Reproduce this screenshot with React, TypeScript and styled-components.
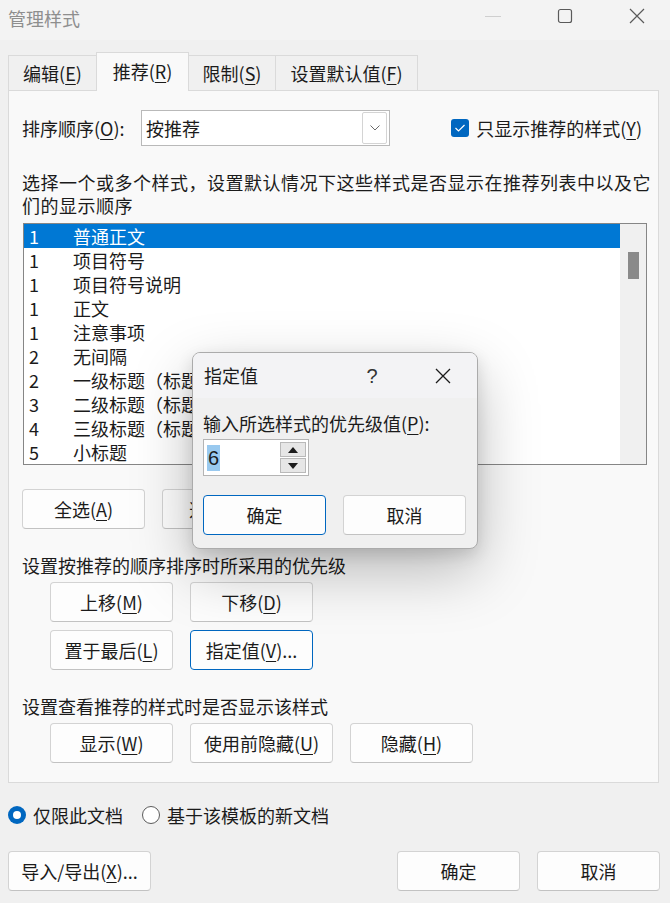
import React from "react";
import styled, { createGlobalStyle } from "styled-components";

const GlobalStyle = createGlobalStyle`
  html, body {
    margin: 0;
    padding: 0;
  }
  body {
    background: #f0f0f0;
    font-family: "Noto Sans CJK SC", "Microsoft YaHei", sans-serif;
    color: #1b1b1b;
  }
  u {
    text-underline-offset: 3px;
    text-decoration-thickness: 1px;
  }
`;

const Window = styled.div`
  position: relative;
  width: 670px;
  height: 903px;
  background: #f0f0f0;
  overflow: hidden;
`;

const TitleBar = styled.div`
  height: 40px;
  display: flex;
  align-items: center;
  padding-left: 8px;
  background: #f3f3f3;
`;

const Title = styled.div`
  flex: 1;
  font-size: 18px;
  color: #8e8e8e;
  line-height: 24px;
  margin-top: -4px;
`;

const Controls = styled.div`
  display: flex;
  height: 40px;
  margin-right: -3px;
`;

const ControlBtn = styled.div`
  width: 72px;
  height: 40px;
  display: flex;
  align-items: center;
  justify-content: center;
  margin-top: -4px;
`;

const TabBar = styled.div`
  display: flex;
  align-items: flex-end;
  margin-top: 13px;
  padding-left: 8px;
  height: 38px;
  position: relative;
  z-index: 1;
  margin-bottom: -1px;
`;

const Tab = styled.div<{ $active?: boolean; $w: number }>`
  box-sizing: border-box;
  width: ${(p) => p.$w}px;
  height: ${(p) => (p.$active ? 39 : 36)}px;
  border: 1px solid #dadada;
  border-bottom: ${(p) => (p.$active ? "none" : "1px solid #dadada")};
  margin-left: -1px;
  background: ${(p) => (p.$active ? "#f9f9f9" : "#f0f0f0")};
  font-size: 18px;
  line-height: 24px;
  display: flex;
  align-items: center;
  justify-content: center;
  padding-bottom: ${(p) => (p.$active ? 2 : 0)}px;
  &:first-child {
    margin-left: 0;
  }
`;

const Panel = styled.div`
  box-sizing: border-box;
  margin-left: 8px;
  width: 651px;
  height: 693px;
  background: #f9f9f9;
  border: 1px solid #dadada;
  padding: 19px 13px 0 13px;
`;

const SortRow = styled.div`
  display: flex;
  align-items: center;
  height: 36px;
`;

const Label = styled.div`
  font-size: 18px;
  line-height: 24px;
  white-space: nowrap;
`;

const SortLabel = styled(Label)`
  width: 119px;
`;

const Select = styled.div`
  box-sizing: border-box;
  width: 249px;
  height: 36px;
  border: 1px solid #b9b9b9;
  background: #fff;
  display: flex;
  align-items: center;
  padding: 1px 2px 1px 4px;
`;

const SelectText = styled.div`
  flex: 1;
  font-size: 18px;
  line-height: 24px;
`;

const SelectArrow = styled.div`
  box-sizing: border-box;
  width: 25px;
  height: 32px;
  border: 1px solid #d4d4d4;
  border-radius: 2px;
  display: flex;
  align-items: center;
  justify-content: center;
`;

const CheckRow = styled.div`
  margin-left: auto;
  margin-right: 3px;
  display: flex;
  align-items: center;
  gap: 7px;
`;

const CheckBox = styled.div`
  width: 18px;
  height: 18px;
  border-radius: 3px;
  background: #0067c0;
  display: flex;
  align-items: center;
  justify-content: center;
`;

const Description = styled.div`
  margin-top: 25px;
  font-size: 18px;
  line-height: 23px;
  white-space: nowrap;
  letter-spacing: 0.5px;
`;

const List = styled.div`
  box-sizing: border-box;
  margin-top: 6px;
  margin-left: 1px;
  width: 624px;
  height: 242px;
  border: 1px solid #868686;
  background: #fff;
  display: flex;
`;

const Rows = styled.div`
  flex: 1;
  overflow: hidden;
`;

const Row = styled.div<{ $selected?: boolean }>`
  display: flex;
  height: 24px;
  align-items: center;
  font-size: 18px;
  line-height: 24px;
  background: ${(p) => (p.$selected ? "#0078d4" : "transparent")};
  color: ${(p) => (p.$selected ? "#fff" : "#1b1b1b")};
  white-space: nowrap;
`;

const Num = styled.div`
  width: 44px;
  padding-left: 5px;
`;

const ScrollTrack = styled.div`
  width: 26px;
  background: #f0f0f0;
  display: flex;
  justify-content: center;
  padding-top: 28px;
`;

const ScrollThumb = styled.div`
  width: 11px;
  height: 27px;
  background: #8a8a8a;
`;

const ButtonRow = styled.div<{ $indent?: number; $top: number }>`
  display: flex;
  gap: 17px;
  margin-top: ${(p) => p.$top}px;
  padding-left: ${(p) => p.$indent ?? 0}px;
`;

const Button = styled.div<{ $w?: number; $focus?: boolean }>`
  box-sizing: border-box;
  width: ${(p) => p.$w ?? 123}px;
  height: 40px;
  border-radius: 4px;
  border: 1px solid ${(p) => (p.$focus ? "#0067c0" : "#d3d3d3")};
  border-bottom-color: ${(p) => (p.$focus ? "#0067c0" : "#c2c2c2")};
  background: #fdfdfd;
  display: flex;
  align-items: center;
  justify-content: center;
  font-size: 18px;
  line-height: 24px;
  white-space: nowrap;
`;

const SectionLabel = styled(Label)`
  margin-top: 24px;
`;

const RadioRow = styled.div`
  display: flex;
  align-items: center;
  margin-top: 20px;
  padding-left: 8px;
  height: 24px;
`;

const RadioItem = styled.div`
  display: flex;
  align-items: center;
  gap: 7px;
  margin-right: 19px;
  font-size: 18px;
  line-height: 24px;
`;

const Radio = styled.div<{ $on?: boolean }>`
  box-sizing: border-box;
  width: 18px;
  height: 18px;
  border-radius: 50%;
  background: ${(p) => (p.$on ? "#0067c0" : "#fff")};
  border: ${(p) => (p.$on ? "none" : "1px solid #5c5c5c")};
  display: flex;
  align-items: center;
  justify-content: center;
  &::after {
    content: "";
    display: ${(p) => (p.$on ? "block" : "none")};
    width: 8px;
    height: 8px;
    border-radius: 50%;
    background: #fff;
  }
`;

const Footer = styled.div`
  display: flex;
  margin-top: 24px;
  padding: 0 10px 0 8px;
  gap: 17px;
`;

const Spacer = styled.div`
  flex: 1;
`;

const Grip = styled.div`
  position: absolute;
  right: 1px;
  bottom: 1px;
  width: 10px;
  height: 10px;
`;

/* small modal */

const Dialog = styled.div`
  position: absolute;
  left: 192px;
  top: 352px;
  box-sizing: border-box;
  width: 286px;
  height: 197px;
  border: 1px solid #ababab;
  border-radius: 8px;
  background: #f0f0f0;
  overflow: hidden;
  box-shadow: 0 22px 60px rgba(0, 0, 0, 0.26), 0 6px 16px rgba(0, 0, 0, 0.12);
  z-index: 5;
`;

const DialogTitle = styled.div`
  height: 45px;
  background: #f3f3f5;
  display: flex;
  align-items: center;
  padding-left: 11px;
`;

const DialogTitleText = styled.div`
  flex: 1;
  font-size: 18px;
  line-height: 24px;
  margin-top: -1px;
`;

const Help = styled.div`
  width: 56px;
  text-align: center;
  font-size: 20px;
  line-height: 24px;
  color: #333;
  font-family: "Liberation Sans", sans-serif;
  margin-right: 15px;
`;

const DialogClose = styled.div`
  width: 56px;
  display: flex;
  justify-content: center;
  margin-right: 6px;
`;

const DialogBody = styled.div`
  padding: 13px 0 0 10px;
`;

const Spin = styled.div`
  box-sizing: border-box;
  margin-top: 4px;
  width: 106px;
  height: 37px;
  border: 1px solid #b4b4b4;
  background: #fff;
  display: flex;
  padding: 2px;
`;

const SpinValue = styled.div`
  flex: 1;
  display: flex;
  align-items: center;
  padding-left: 1px;
`;

const Selected = styled.span`
  background: #99c9ef;
  font-size: 20px;
  line-height: 26px;
  padding: 0 1px;
  font-family: "Liberation Sans", sans-serif;
`;

const SpinButtons = styled.div`
  width: 26px;
  display: flex;
  flex-direction: column;
  gap: 1px;
`;

const SpinBtn = styled.div`
  box-sizing: border-box;
  flex: 1;
  background: #e6e6e6;
  border: 1px solid #b9b9b9;
  display: flex;
  align-items: center;
  justify-content: center;
`;

const DialogButtons = styled.div`
  display: flex;
  gap: 17px;
  margin-top: 19px;
`;

const rows: [string, string][] = [
  ["1", "普通正文"],
  ["1", "项目符号"],
  ["1", "项目符号说明"],
  ["1", "正文"],
  ["1", "注意事项"],
  ["2", "无间隔"],
  ["2", "一级标题（标题 1）"],
  ["3", "二级标题（标题 2）"],
  ["4", "三级标题（标题 3）"],
  ["5", "小标题"],
];

export default function App() {
  return (
    <Window>
      <GlobalStyle />
      <TitleBar>
        <Title>管理样式</Title>
        <Controls>
          <ControlBtn>
            <svg width="16" height="16" viewBox="0 0 16 16">
              <line x1="0" y1="8.5" x2="16" y2="8.5" stroke="#cfcfcf" strokeWidth="1" />
            </svg>
          </ControlBtn>
          <ControlBtn>
            <svg width="16" height="16" viewBox="0 0 16 16">
              <rect x="1.5" y="1.5" width="13" height="13" rx="2" fill="none" stroke="#5a5a5a" strokeWidth="1.2" />
            </svg>
          </ControlBtn>
          <ControlBtn>
            <svg width="16" height="16" viewBox="0 0 16 16">
              <path d="M1 1 L15 15 M15 1 L1 15" stroke="#5a5a5a" strokeWidth="1.2" />
            </svg>
          </ControlBtn>
        </Controls>
      </TitleBar>

      <TabBar>
        <Tab $w={89}>
          编辑(<u>E</u>)
        </Tab>
        <Tab $w={93} $active>
          推荐(<u>R</u>)
        </Tab>
        <Tab $w={88}>
          限制(<u>S</u>)
        </Tab>
        <Tab $w={143}>
          设置默认值(<u>F</u>)
        </Tab>
      </TabBar>

      <Panel>
        <SortRow>
          <SortLabel>
            排序顺序(<u>O</u>):
          </SortLabel>
          <Select>
            <SelectText>按推荐</SelectText>
            <SelectArrow>
              <svg width="10" height="6" viewBox="0 0 10 6">
                <path d="M0.5 0.5 L5 5 L9.5 0.5" fill="none" stroke="#6a6a6a" strokeWidth="1" />
              </svg>
            </SelectArrow>
          </Select>
          <CheckRow>
            <CheckBox>
              <svg width="12" height="10" viewBox="0 0 12 10">
                <path d="M1.5 5 L4.5 8 L10.5 2" fill="none" stroke="#fff" strokeWidth="1.2" />
              </svg>
            </CheckBox>
            <Label>
              只显示推荐的样式(<u>Y</u>)
            </Label>
          </CheckRow>
        </SortRow>

        <Description>
          选择一个或多个样式，设置默认情况下这些样式是否显示在推荐列表中以及它
          <br />
          们的显示顺序
        </Description>

        <List>
          <Rows>
            {rows.map(([n, name], i) => (
              <Row key={i} $selected={i === 0}>
                <Num>{n}</Num>
                <div>{name}</div>
              </Row>
            ))}
          </Rows>
          <ScrollTrack>
            <ScrollThumb />
          </ScrollTrack>
        </List>

        <ButtonRow $top={24}>
          <Button>
            全选(<u>A</u>)
          </Button>
          <Button $w={150}>
            选择内置(<u>B</u>)
          </Button>
        </ButtonRow>

        <SectionLabel>设置按推荐的顺序排序时所采用的优先级</SectionLabel>
        <ButtonRow $top={5} $indent={28}>
          <Button>
            上移(<u>M</u>)
          </Button>
          <Button>
            下移(<u>D</u>)
          </Button>
        </ButtonRow>
        <ButtonRow $top={8} $indent={28}>
          <Button>
            置于最后(<u>L</u>)
          </Button>
          <Button $focus>
            指定值(<u>V</u>)...
          </Button>
        </ButtonRow>

        <SectionLabel>设置查看推荐的样式时是否显示该样式</SectionLabel>
        <ButtonRow $top={5} $indent={28}>
          <Button>
            显示(<u>W</u>)
          </Button>
          <Button $w={143}>
            使用前隐藏(<u>U</u>)
          </Button>
          <Button>
            隐藏(<u>H</u>)
          </Button>
        </ButtonRow>
      </Panel>

      <RadioRow>
        <RadioItem>
          <Radio $on />
          仅限此文档
        </RadioItem>
        <RadioItem>
          <Radio />
          基于该模板的新文档
        </RadioItem>
      </RadioRow>

      <Footer>
        <Button $w={143}>
          导入/导出(<u>X</u>)...
        </Button>
        <Spacer />
        <Button>确定</Button>
        <Button>取消</Button>
      </Footer>

      <Grip>
        <svg width="10" height="10" viewBox="0 0 10 10">
          <path d="M9 3 L3 9 M9 6 L6 9" stroke="#9a9a9a" strokeWidth="1" />
        </svg>
      </Grip>

      <Dialog>
        <DialogTitle>
          <DialogTitleText>指定值</DialogTitleText>
          <Help>?</Help>
          <DialogClose>
            <svg width="16" height="16" viewBox="0 0 16 16">
              <path d="M1 1 L15 15 M15 1 L1 15" stroke="#1b1b1b" strokeWidth="1.3" />
            </svg>
          </DialogClose>
        </DialogTitle>
        <DialogBody>
          <Label>
            输入所选样式的优先级值(<u>P</u>):
          </Label>
          <Spin>
            <SpinValue>
              <Selected>6</Selected>
            </SpinValue>
            <SpinButtons>
              <SpinBtn>
                <svg width="10" height="6" viewBox="0 0 10 6">
                  <path d="M0 6 L5 0 L10 6 Z" fill="#1b1b1b" />
                </svg>
              </SpinBtn>
              <SpinBtn>
                <svg width="10" height="6" viewBox="0 0 10 6">
                  <path d="M0 0 L10 0 L5 6 Z" fill="#1b1b1b" />
                </svg>
              </SpinBtn>
            </SpinButtons>
          </Spin>
          <DialogButtons>
            <Button $focus>确定</Button>
            <Button>取消</Button>
          </DialogButtons>
        </DialogBody>
      </Dialog>
    </Window>
  );
}
